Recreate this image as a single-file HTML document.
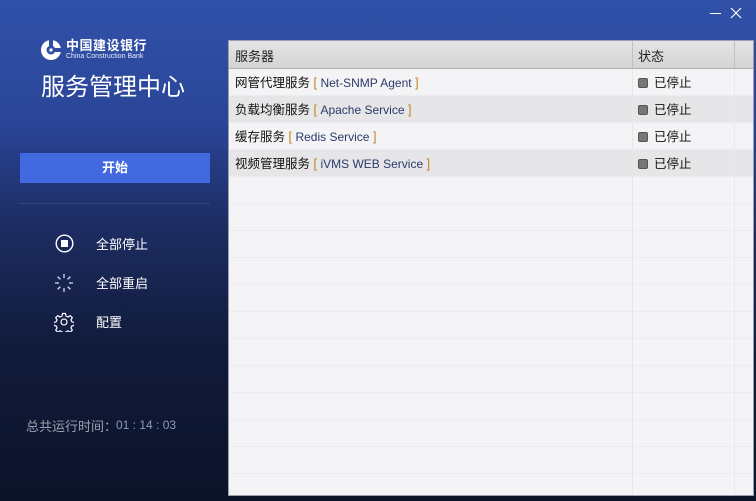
<!DOCTYPE html>
<html><head><meta charset="utf-8"><style>
*{margin:0;padding:0;box-sizing:border-box}
body{width:756px;height:501px;overflow:hidden;position:relative;font-family:"Liberation Sans","Noto Sans CJK SC",sans-serif;background:linear-gradient(180deg,#3151a9 0%,#2a4597 25%,#1d2d62 45%,#111a3a 70%,#0c1429 100%)}
.a{position:absolute}
.panel{left:228px;top:40px;width:526px;height:456px;background:#f4f4f6;border:1px solid #9aa0b0}
.hdr{left:0;top:0;width:524px;height:28px;background:linear-gradient(#e4e4e4,#d4d4d4);border-bottom:1px solid #b0b0b0;font-size:13px;color:#222}
.row{left:0;width:524px;height:27px;border-bottom:1px solid #ececee;font-size:12.5px;color:#111;line-height:29px}
.vl{top:0;width:1px;height:454px;background:#e8e8ea}
.sq{display:inline-block;width:10px;height:10px;background:#777;border:1px solid #555;border-radius:2px;margin-right:6px;vertical-align:-1px}
.en{color:#2a3a6a;font-size:12px}
.br{color:#c08020}
.menu{color:#fff;font-size:13px}
</style></head><body>
<div class="a" style="left:710px;top:13px;width:11px;height:1px;background:#fff"></div>
<svg class="a" style="left:730px;top:7px" width="12" height="12" stroke="#fff" stroke-width="1.2"><line x1="1" y1="1" x2="11" y2="11"/><line x1="11" y1="1" x2="1" y2="11"/></svg>
<svg class="a" style="left:40px;top:39px" width="22" height="22" viewBox="0 0 22 22"><circle cx="11" cy="11" r="10" fill="#fff"/><circle cx="11" cy="11" r="4.5" fill="#2e4ea4"/><rect x="9" y="0" width="4" height="8" fill="#2e4ea4"/><rect x="14" y="9" width="8" height="4" fill="#2e4ea4"/><rect x="9.5" y="9.5" width="3" height="3" fill="#fff"/></svg>
<div class="a" style="left:66px;top:39px;color:#fff;font-size:13px;font-weight:bold;letter-spacing:0.5px;line-height:14px">中国建设银行</div>
<div class="a" style="left:66px;top:53px;color:#e8ecf8;font-size:7px;line-height:8px">China Construction Bank</div>
<div class="a" style="left:41px;top:72px;color:#fff;font-size:24px;line-height:32px">服务管理中心</div>
<div class="a" style="left:20px;top:153px;width:190px;height:30px;background:#4269df;color:#fff;font-size:13px;font-weight:bold;text-align:center;line-height:30px">开始</div>
<div class="a" style="left:19px;top:203px;width:191px;height:1px;background:#34467a"></div>
<svg class="a" style="left:55px;top:234px" width="19" height="19"><circle cx="9.5" cy="9.5" r="8.3" fill="none" stroke="#fff" stroke-width="1.4"/><rect x="6" y="6" width="7" height="7" fill="#fff"/></svg>
<div class="a menu" style="left:96px;top:234px">全部停止</div>
<svg class="a" style="left:54px;top:273px" width="20" height="20" stroke="#ccd" stroke-width="1.4"><line x1="10" y1="1" x2="10" y2="5"/><line x1="10" y1="15" x2="10" y2="19"/><line x1="1" y1="10" x2="5" y2="10"/><line x1="15" y1="10" x2="19" y2="10"/><line x1="3.6" y1="3.6" x2="6.4" y2="6.4"/><line x1="13.6" y1="13.6" x2="16.4" y2="16.4"/><line x1="3.6" y1="16.4" x2="6.4" y2="13.6"/><line x1="13.6" y1="6.4" x2="16.4" y2="3.6"/></svg>
<div class="a menu" style="left:96px;top:273px">全部重启</div>
<svg class="a" style="left:54px;top:312px" width="20" height="20" viewBox="0 0 20 20" fill="none" stroke="#fff" stroke-width="1.2"><path d="M8.5 1.5h3l.5 2.5 2 1 2.2-1.4 2.1 2.1-1.4 2.2 1 2 2.5.5v3l-2.5.5-1 2 1.4 2.2-2.1 2.1-2.2-1.4-2 1-.5 2.5h-3l-.5-2.5-2-1-2.2 1.4-2.1-2.1 1.4-2.2-1-2-2.5-.5v-3l2.5-.5 1-2-1.4-2.200 2.1-2.1 2.2 1.4 2-1z"/><circle cx="10" cy="10" r="3"/></svg>
<div class="a menu" style="left:96px;top:312px">配置</div>
<div class="a" style="left:26px;top:416px;color:#9aa0ae;font-size:13px">总共运行时间：</div>
<div class="a" style="left:116px;top:418px;color:#8a9ab8;font-size:12px">01 : 14 : 03</div>
<div class="a panel">
<div class="a hdr"><span class="a" style="left:6px;top:5px">服务器</span><span class="a" style="left:409px;top:5px">状态</span></div>
<div class="a row" style="top:28px;background:#f4f4f6"><span class="a" style="left:6px">网管代理服务 <span class="br">[</span> <span class="en">Net-SNMP Agent</span> <span class="br">]</span></span><span class="a" style="left:409px"><i class="sq"></i>已停止</span></div>
<div class="a row" style="top:55px;background:#e6e6e8"><span class="a" style="left:6px">负载均衡服务 <span class="br">[</span> <span class="en">Apache Service</span> <span class="br">]</span></span><span class="a" style="left:409px"><i class="sq"></i>已停止</span></div>
<div class="a row" style="top:82px;background:#f4f4f6"><span class="a" style="left:6px">缓存服务 <span class="br">[</span> <span class="en">Redis Service</span> <span class="br">]</span></span><span class="a" style="left:409px"><i class="sq"></i>已停止</span></div>
<div class="a row" style="top:109px;background:#e6e6e8"><span class="a" style="left:6px">视频管理服务 <span class="br">[</span> <span class="en">iVMS WEB Service</span> <span class="br">]</span></span><span class="a" style="left:409px"><i class="sq"></i>已停止</span></div>
<div class="a row" style="top:136px"></div><div class="a row" style="top:163px"></div><div class="a row" style="top:190px"></div><div class="a row" style="top:217px"></div><div class="a row" style="top:244px"></div><div class="a row" style="top:271px"></div><div class="a row" style="top:298px"></div><div class="a row" style="top:325px"></div><div class="a row" style="top:352px"></div><div class="a row" style="top:379px"></div><div class="a row" style="top:406px"></div>
<div class="a vl" style="left:403px"></div>
<div class="a vl" style="left:505px"></div>
<div class="a" style="left:403px;top:0;width:1px;height:28px;background:#fff;border-right:1px solid #c0c0c0"></div>
<div class="a" style="left:505px;top:0;width:1px;height:28px;background:#fff;border-right:1px solid #c0c0c0"></div>
</div>
</body></html>
